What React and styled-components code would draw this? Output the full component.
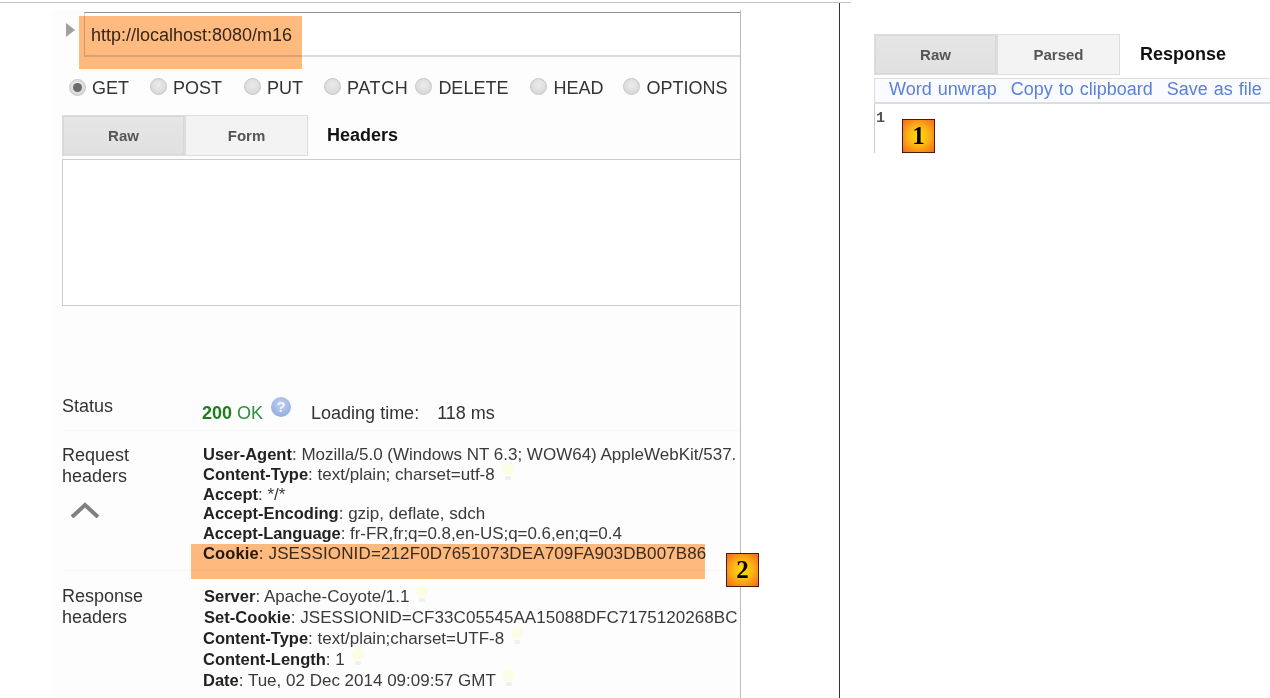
import React from "react";
import styled, { createGlobalStyle } from "styled-components";

const Global = createGlobalStyle`
  html, body {
    margin: 0;
    background: #fff;
    overflow: hidden;
  }
  body {
    font-family: "Liberation Sans", Arial, sans-serif;
    color: #333;
  }
`;

const Page = styled.div`
  width: 1270px;
  height: 698px;
  overflow: hidden;
  padding-top: 2px;
  box-sizing: border-box;
`;
const TopRule = styled.div`
  width: 851px;
  height: 1px;
  background: #c4c4c4;
`;
const Columns = styled.div`
  display: flex;
  height: 695px;
`;
const LeftPane = styled.div`
  width: 840px;
  flex: none;
  box-sizing: border-box;
  border-right: 1px solid #333;
  padding: 7px 0 0 52px;
`;
const Panel = styled.div`
  width: 689px;
  height: 688px;
  box-sizing: border-box;
  background: #fdfdfd;
  border-right: 1px solid #bdbdbd;
`;
const UrlRow = styled.div`
  position: relative;
  display: flex;
  padding: 2px 0 0 14px;
`;
const Arrow = styled.span`
  width: 0;
  height: 0;
  margin: 11px 9px 0 0;
  border-left: 9px solid #a0a0a0;
  border-top: 7px solid transparent;
  border-bottom: 7px solid transparent;
`;
const UrlInput = styled.div`
  flex: 1;
  height: 45px;
  box-sizing: border-box;
  background: #fff;
  border-top: 1px solid #8f8f8f;
  border-left: 1px solid #d0d0d0;
  border-bottom: 2px solid #dcdcdc;
  padding: 11px 0 0 6px;
  font-size: 18px;
  line-height: 22px;
`;
const Highlight = styled.span`
  position: absolute;
  background: #ffbb7f;
  mix-blend-mode: multiply;
  left: ${(p) => p.$left}px;
  top: ${(p) => p.$top}px;
  width: ${(p) => p.$width}px;
  height: ${(p) => p.$height}px;
`;
const MethodRow = styled.div`
  display: flex;
  align-items: center;
  height: 24px;
  margin: 19px 0 0 17px;
  font-size: 18px;
`;
const Method = styled.label`
  display: flex;
  align-items: center;
  gap: 6px;
  margin-right: ${(p) => p.$gap}px;
  letter-spacing: ${(p) => p.$track || 0}px;
  white-space: nowrap;
`;
const Radio = styled.span`
  position: relative;
  width: 17px;
  height: 17px;
  box-sizing: border-box;
  border-radius: 50%;
  border: 1px solid #c6c6c6;
  background: radial-gradient(circle at 50% 40%, #ececec, #d2d2d2);
  margin-bottom: ${(p) => (p.$checked ? 2 : 4)}px;
  &::after {
    content: "";
    display: ${(p) => (p.$checked ? "block" : "none")};
    position: absolute;
    left: 3px;
    top: 3px;
    width: 9px;
    height: 9px;
    border-radius: 50%;
    background: #6a6a6a;
  }
`;
const TabBar = styled.div`
  display: flex;
  align-items: center;
  height: 41px;
  margin: ${(p) => p.$margin};
`;
const Tab = styled.div`
  width: 123px;
  height: 41px;
  box-sizing: border-box;
  display: flex;
  align-items: center;
  justify-content: center;
  font-size: 15px;
  font-weight: bold;
  color: #555;
  border: 1px solid #ddd;
  background: ${(p) => (p.$active ? "linear-gradient(#e6e6e6, #e0e0e0)" : "#f3f3f3")};
  box-shadow: ${(p) => (p.$active ? "inset 0 0 0 1px #d8d8d8" : "none")};
`;
const TabTitle = styled.div`
  margin-left: ${(p) => p.$gap}px;
  font-size: 18px;
  font-weight: bold;
  color: #111;
`;
const HeadersBox = styled.div`
  height: 147px;
  margin: 3px 0 0 10px;
  box-sizing: border-box;
  background: #fff;
  border: 1px solid #ccc;
  border-right: none;
`;
const InfoRow = styled.div`
  position: relative;
  display: grid;
  grid-template-columns: 140px minmax(0, 1fr);
  margin-left: 10px;
  height: ${(p) => p.$height}px;
  margin-top: ${(p) => p.$top || 0}px;
  border-bottom: ${(p) => (p.$line ? "1px solid #f7f7f7" : "none")};
  box-sizing: border-box;
`;
const RowLabel = styled.div`
  font-size: 18px;
  line-height: 21px;
  color: #333;
  padding-top: ${(p) => p.$top}px;
`;
const Chevron = styled.svg`
  display: block;
  width: 30px;
  height: 16px;
  margin: 15px 0 0 8px;
`;
const StatusValue = styled.div`
  display: flex;
  align-items: flex-start;
  font-size: 18px;
  line-height: 21px;
  padding-top: 7px;
`;
const Code = styled.span`
  color: #2f8f3a;
  b {
    color: #1f7d1f;
  }
`;
const Help = styled.span`
  width: 20px;
  height: 20px;
  margin: -6px 20px 0 8px;
  border-radius: 50%;
  background: radial-gradient(circle at 50% 35%, #c0d0f0, #86a4de);
  color: #f4f7ff;
  font-size: 15px;
  font-weight: bold;
  line-height: 20px;
  text-align: center;
`;
const LoadTime = styled.span`
  margin-left: 18px;
`;
const HeaderList = styled.div`
  padding-top: ${(p) => p.$top}px;
  overflow: hidden;
  min-width: 0;
`;
const HeaderLine = styled.div`
  display: flex;
  align-items: center;
  height: ${(p) => p.$height}px;
  padding-left: ${(p) => (p.$inset ? 2 : 1)}px;
  font-size: 17px;
  letter-spacing: ${(p) => p.$track || 0}px;
  white-space: nowrap;
  color: #3a3a3a;
  b {
    color: #222;
    font-size: 16.5px;
  }
`;
const Bulb = styled.svg`
  flex: none;
  width: 14px;
  height: 20px;
  margin: -6px 0 0 6px;
`;
const Badge = styled.div`
  position: absolute;
  left: ${(p) => p.$left}px;
  top: ${(p) => p.$top}px;
  width: 33px;
  height: 34px;
  box-sizing: border-box;
  display: flex;
  align-items: center;
  justify-content: center;
  border: 1px solid #4a1c08;
  background: radial-gradient(circle, #ffe000 0%, #fdb515 45%, #f4661e 100%);
  font-family: "Liberation Serif", serif;
  font-size: 25px;
  font-weight: bold;
  color: #000;
`;
const RightPane = styled.div`
  flex: 1;
  min-width: 0;
  padding: 31px 0 0 34px;
`;
const Toolbar = styled.div`
  display: flex;
  gap: 14px;
  height: 26px;
  margin-top: 3px;
  padding-left: 14px;
  box-sizing: border-box;
  background: #fafbff;
  border-top: 1px solid #ddd;
  border-left: 1px solid #ddd;
  border-bottom: 2px solid #ddd;
  font-size: 18px;
  line-height: 20px;
  word-spacing: 1px;
  white-space: nowrap;
  color: #5b80d8;
`;
const Output = styled.div`
  position: relative;
  height: 49px;
  box-sizing: border-box;
  border-left: 1px solid #ccc;
  padding: 8px 0 0 1px;
  font-family: "Liberation Mono", monospace;
  font-size: 15px;
  font-weight: bold;
  line-height: 14px;
  color: #555;
`;

const BulbIcon = () => (
  <Bulb viewBox="0 0 14 20">
    <path d="M7 1C3.5 1 1 3.500 1 6.800c0 2.600 2 4 2.600 6.200h6.800C11 10.800 13 9.400 13 6.800 13 3.500 10.500 1 7 1z" fill="#fdfce4" />
    <rect x="4" y="14" width="6" height="4" rx="1.500" fill="#f0f0f0" />
  </Bulb>
);

const methods = [
  { name: "GET", gap: 21, checked: true },
  { name: "POST", gap: 22 },
  { name: "PUT", gap: 21 },
  { name: "PATCH", gap: 7, track: 0.6 },
  { name: "DELETE", gap: 22 },
  { name: "HEAD", gap: 20 },
  { name: "OPTIONS", gap: 0 },
];

const App = () => {
  return (
    <Page>
      <Global />
      <TopRule />
      <Columns>
        <LeftPane>
          <Panel>
            <UrlRow>
              <Arrow />
              <UrlInput>http://localhost:8080/m16</UrlInput>
              <Highlight $left={27} $top={6} $width={223} $height={53} />
            </UrlRow>
            <MethodRow>
              {methods.map((m) => (
                <Method key={m.name} $gap={m.gap} $track={m.track}>
                  <Radio $checked={m.checked} />
                  {m.name}
                </Method>
              ))}
            </MethodRow>
            <TabBar $margin="15px 0 0 10px">
              <Tab $active>Raw</Tab>
              <Tab>Form</Tab>
              <TabTitle $gap={19}>Headers</TabTitle>
            </TabBar>
            <HeadersBox />
            <InfoRow $top={90} $height={35} $line>
              <RowLabel $top={0}>Status</RowLabel>
              <StatusValue>
                <Code>
                  <b>200</b> OK
                </Code>
                <Help>?</Help>
                Loading time:
                <LoadTime>118 ms</LoadTime>
              </StatusValue>
            </InfoRow>
            <InfoRow $height={140} $line>
              <div>
                <RowLabel $top={14}>
                  Request
                  <br />
                  headers
                </RowLabel>
                <Chevron viewBox="0 0 30 16">
                  <path d="M2 15 L15 3 L28 15" fill="none" stroke="#808080" strokeWidth="4" />
                </Chevron>
              </div>
              <HeaderList $top={14}>
                <HeaderLine $height={19.8}>
                  <span>
                    <b>User-Agent</b>: Mozilla/5.0 (Windows NT 6.3; WOW64) AppleWebKit/537.
                  </span>
                </HeaderLine>
                <HeaderLine $height={19.8}>
                  <span>
                    <b>Content-Type</b>: text/plain; charset=utf-8
                  </span>
                  <BulbIcon />
                </HeaderLine>
                <HeaderLine $height={19.8}>
                  <span>
                    <b>Accept</b>: */*
                  </span>
                </HeaderLine>
                <HeaderLine $height={19.8}>
                  <span>
                    <b>Accept-Encoding</b>: gzip, deflate, sdch
                  </span>
                </HeaderLine>
                <HeaderLine $height={19.8} $track={-0.05}>
                  <span>
                    <b>Accept-Language</b>: fr-FR,fr;q=0.8,en-US;q=0.6,en;q=0.4
                  </span>
                </HeaderLine>
                <HeaderLine $height={19.8} $track={0.13}>
                  <span>
                    <b>Cookie</b>: JSESSIONID=212F0D7651073DEA709FA903DB007B86
                  </span>
                </HeaderLine>
              </HeaderList>
              <Highlight $left={129} $top={113} $width={514} $height={35} />
              <Badge $left={664} $top={122}>2</Badge>
            </InfoRow>
            <InfoRow $height={125}>
              <RowLabel $top={15}>
                Response
                <br />
                headers
              </RowLabel>
              <HeaderList $top={15}>
                <HeaderLine $inset $height={21}>
                  <span>
                    <b>Server</b>: Apache-Coyote/1.1
                  </span>
                  <BulbIcon />
                </HeaderLine>
                <HeaderLine $inset $height={21} $track={0.05}>
                  <span>
                    <b>Set-Cookie</b>: JSESSIONID=CF33C05545AA15088DFC7175120268BC
                  </span>
                </HeaderLine>
                <HeaderLine $height={21}>
                  <span>
                    <b>Content-Type</b>: text/plain;charset=UTF-8
                  </span>
                  <BulbIcon />
                </HeaderLine>
                <HeaderLine $height={21}>
                  <span>
                    <b>Content-Length</b>: 1
                  </span>
                  <BulbIcon />
                </HeaderLine>
                <HeaderLine $height={21}>
                  <span>
                    <b>Date</b>: Tue, 02 Dec 2014 09:09:57 GMT
                  </span>
                  <BulbIcon />
                </HeaderLine>
              </HeaderList>
            </InfoRow>
          </Panel>
        </LeftPane>
        <RightPane>
          <TabBar>
            <Tab $active>Raw</Tab>
            <Tab>Parsed</Tab>
            <TabTitle $gap={20}>Response</TabTitle>
          </TabBar>
          <Toolbar>
            <span>Word unwrap</span>
            <span>Copy to clipboard</span>
            <span>Save as file</span>
          </Toolbar>
          <Output>
            1
            <Badge $left={27} $top={15}>1</Badge>
          </Output>
        </RightPane>
      </Columns>
    </Page>
  );
};

export default App;
